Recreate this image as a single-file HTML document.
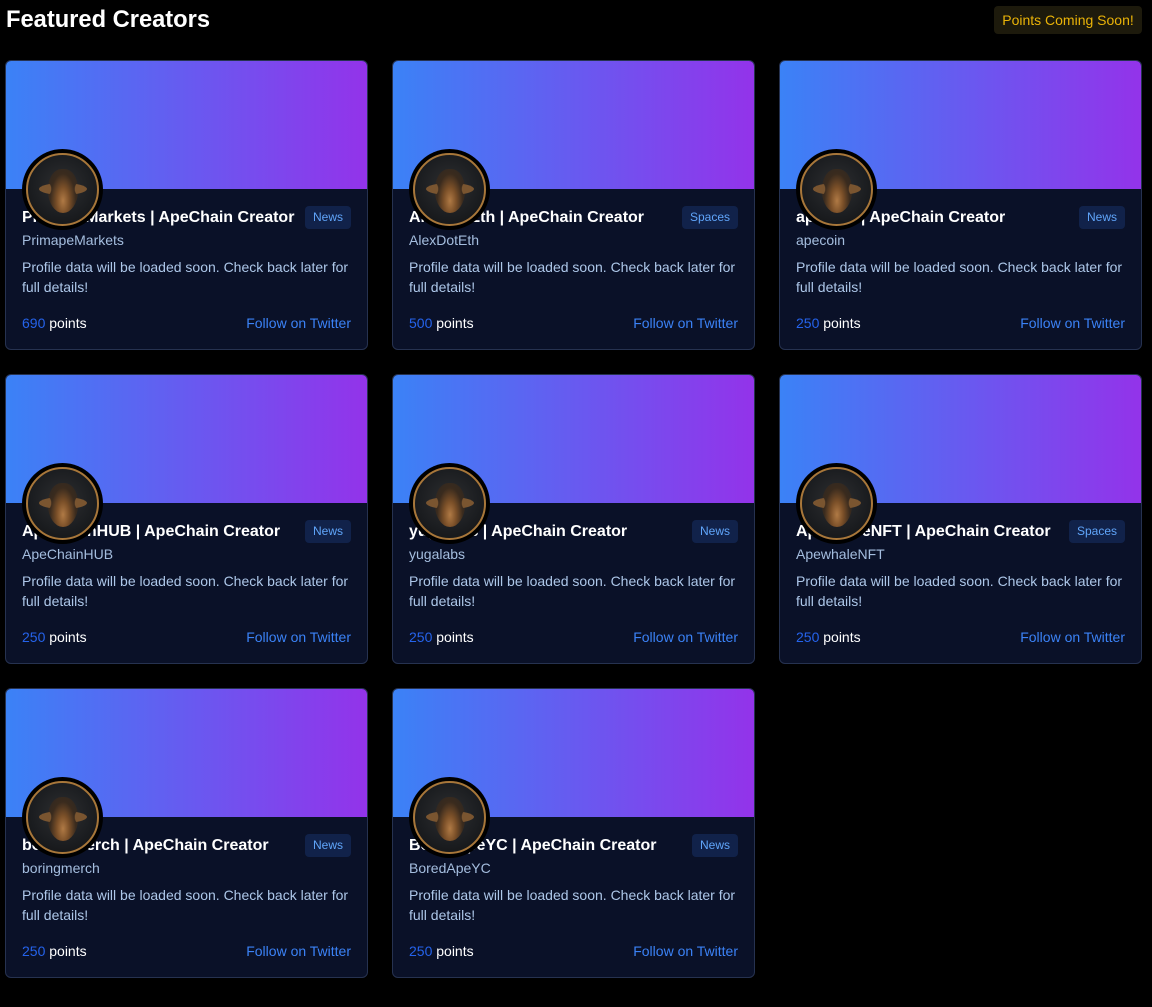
<!DOCTYPE html>
<html><head><meta charset="utf-8"><style>
*{box-sizing:border-box;margin:0;padding:0}
body{width:1152px;height:1007px;background:#000;font-family:"Liberation Sans",Arial,sans-serif;color:#fff;position:relative;overflow:hidden}
h1{position:absolute;left:6px;top:7px;font-size:23.7px;font-weight:bold}
.soon{position:absolute;left:994px;top:6px;width:148px;height:28px;background:#1d1a0c;border-radius:4px;color:#eab308;font-size:14px;line-height:28px;text-align:center}
.card{position:absolute;width:363px;height:290px;background:#0a1128;border:1px solid #263250;border-radius:6px;overflow:hidden}
.ban{height:128px;background:linear-gradient(90deg,#3b82f6,#9333ea)}
.av{position:absolute;left:16px;top:88px;width:81px;height:81px;border-radius:50%;background:#000;padding:4px}
.av div{position:relative;width:100%;height:100%;border-radius:50%;border:2px solid #a8773a;background:radial-gradient(circle at 50% 45%,#2e2f31 0,#1b1d20 60%,#111 100%)}
.av div:before{content:"";position:absolute;left:20px;top:14px;width:30px;height:44px;border-radius:45% 45% 50% 50%;background:radial-gradient(ellipse at 50% 72%,#b07a45 0,#7a4f28 30%,#3a2b1e 60%,#2a2522 100%)}
.av div:after{content:"";position:absolute;left:11px;top:28px;width:48px;height:12px;border-radius:50%;background:radial-gradient(circle at 8% 50%,#7a5530 0,#7a5530 18%,transparent 20%),radial-gradient(circle at 92% 50%,#7a5530 0,#7a5530 18%,transparent 20%)}
.t{position:absolute;left:16px;top:148px;font-size:16px;font-weight:bold;white-space:nowrap}
.b{position:absolute;right:16px;top:145px;height:23px;padding:0 8px;background:#11224a;color:#60a5fa;font-size:12px;line-height:23px;border-radius:4px}
.u{position:absolute;left:16px;top:171px;font-size:14px;color:#bfdbfe;opacity:.85}
.d{position:absolute;left:16px;top:196px;width:335px;font-size:14px;line-height:20px;color:#bfdbfe;opacity:.9}
.p{position:absolute;left:16px;top:254px;font-size:14px}
.p span{color:#2563eb}
.f{position:absolute;right:16px;top:254px;font-size:14px;color:#3b82f6}
</style></head><body>
<h1>Featured Creators</h1>
<div class="soon">Points Coming Soon!</div>

<div class="card" style="left:5px;top:60px"><div class="ban"></div><div class="t">PrimapeMarkets | ApeChain Creator</div><div class="b">News</div><div class="av"><div></div></div><div class="u">PrimapeMarkets</div><div class="d">Profile data will be loaded soon. Check back later for full details!</div><div class="p"><span>690</span> points</div><div class="f">Follow on Twitter</div></div>
<div class="card" style="left:392px;top:60px"><div class="ban"></div><div class="t">AlexDotEth | ApeChain Creator</div><div class="b">Spaces</div><div class="av"><div></div></div><div class="u">AlexDotEth</div><div class="d">Profile data will be loaded soon. Check back later for full details!</div><div class="p"><span>500</span> points</div><div class="f">Follow on Twitter</div></div>
<div class="card" style="left:779px;top:60px"><div class="ban"></div><div class="t">apecoin | ApeChain Creator</div><div class="b">News</div><div class="av"><div></div></div><div class="u">apecoin</div><div class="d">Profile data will be loaded soon. Check back later for full details!</div><div class="p"><span>250</span> points</div><div class="f">Follow on Twitter</div></div>

<div class="card" style="left:5px;top:374px"><div class="ban"></div><div class="t">ApeChainHUB | ApeChain Creator</div><div class="b">News</div><div class="av"><div></div></div><div class="u">ApeChainHUB</div><div class="d">Profile data will be loaded soon. Check back later for full details!</div><div class="p"><span>250</span> points</div><div class="f">Follow on Twitter</div></div>
<div class="card" style="left:392px;top:374px"><div class="ban"></div><div class="t">yugalabs | ApeChain Creator</div><div class="b">News</div><div class="av"><div></div></div><div class="u">yugalabs</div><div class="d">Profile data will be loaded soon. Check back later for full details!</div><div class="p"><span>250</span> points</div><div class="f">Follow on Twitter</div></div>
<div class="card" style="left:779px;top:374px"><div class="ban"></div><div class="t">ApewhaleNFT | ApeChain Creator</div><div class="b">Spaces</div><div class="av"><div></div></div><div class="u">ApewhaleNFT</div><div class="d">Profile data will be loaded soon. Check back later for full details!</div><div class="p"><span>250</span> points</div><div class="f">Follow on Twitter</div></div>

<div class="card" style="left:5px;top:688px"><div class="ban"></div><div class="t">boringmerch | ApeChain Creator</div><div class="b">News</div><div class="av"><div></div></div><div class="u">boringmerch</div><div class="d">Profile data will be loaded soon. Check back later for full details!</div><div class="p"><span>250</span> points</div><div class="f">Follow on Twitter</div></div>
<div class="card" style="left:392px;top:688px"><div class="ban"></div><div class="t">BoredApeYC | ApeChain Creator</div><div class="b">News</div><div class="av"><div></div></div><div class="u">BoredApeYC</div><div class="d">Profile data will be loaded soon. Check back later for full details!</div><div class="p"><span>250</span> points</div><div class="f">Follow on Twitter</div></div>
</body></html>
